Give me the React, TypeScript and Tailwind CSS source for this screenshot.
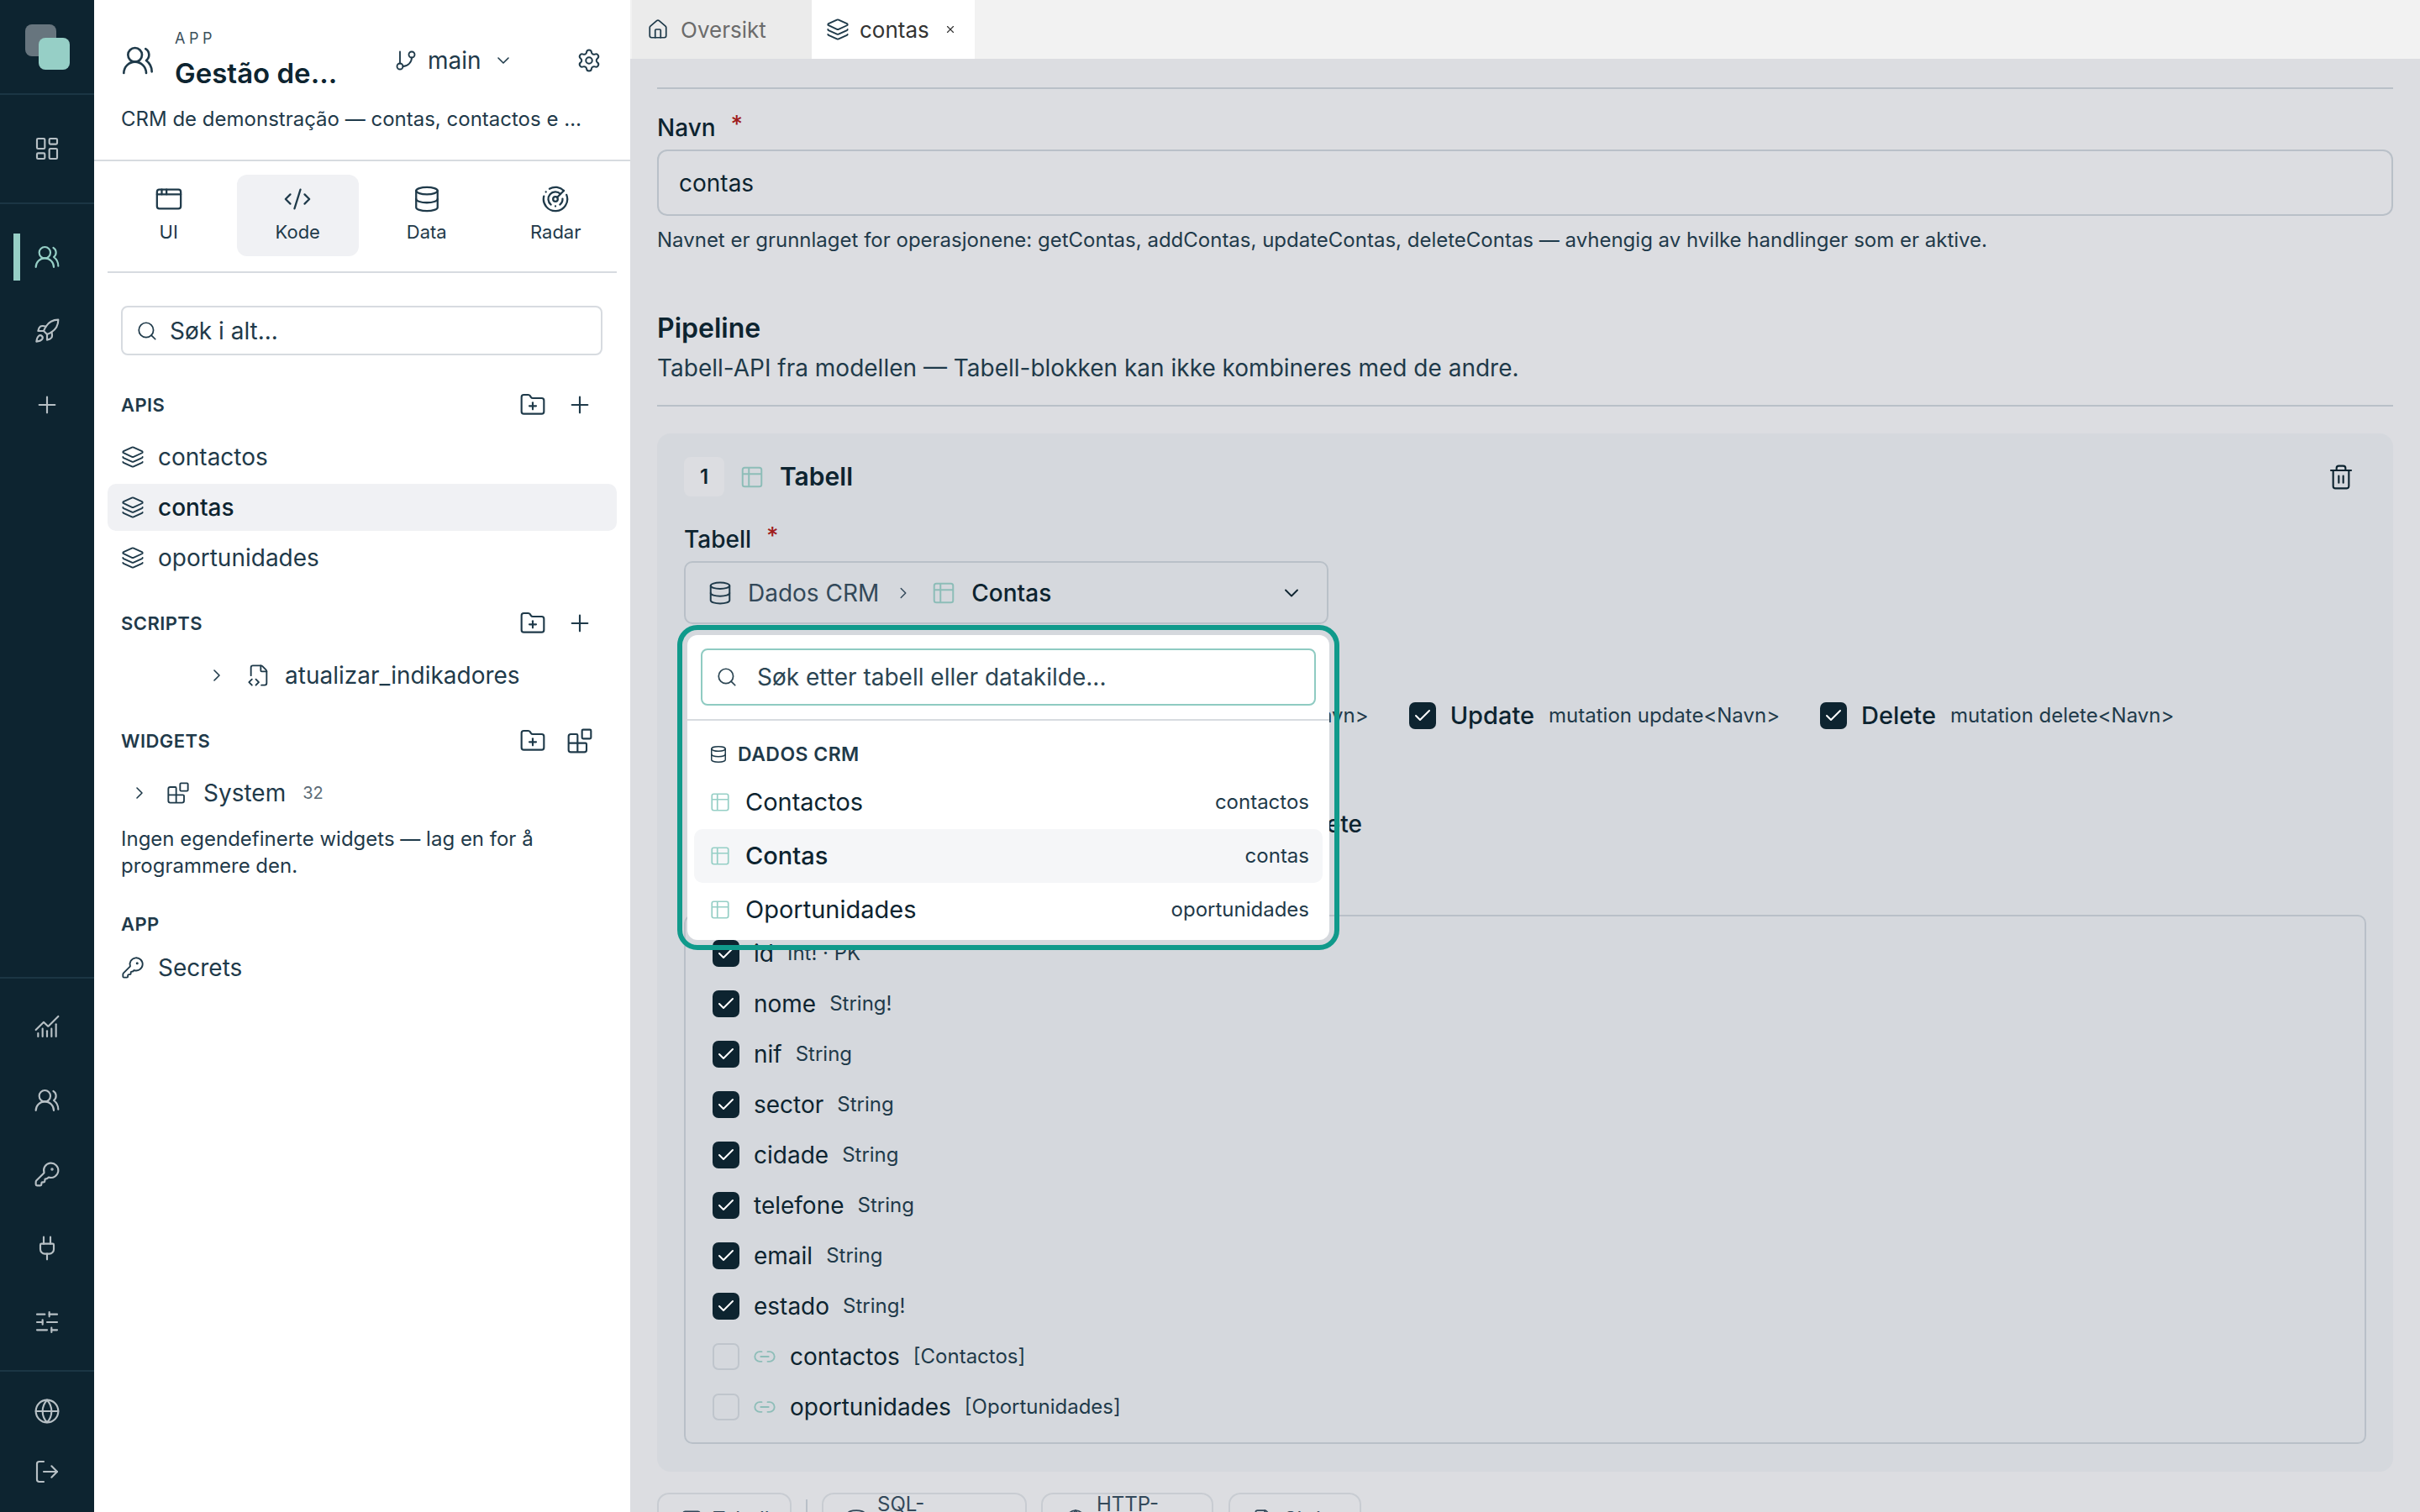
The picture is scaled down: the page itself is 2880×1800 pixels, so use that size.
import {
  AppWindow,
  Blocks,
  Check,
  ChartNoAxesCombined,
  ChevronDown,
  ChevronRight,
  CodeXml,
  Database,
  FileCode2,
  FolderPlus,
  GitBranch,
  Globe,
  House,
  KeyRound,
  Layers,
  LayoutDashboard,
  Link2,
  LogOut,
  Plug,
  Plus,
  Radar,
  Rocket,
  Search,
  Settings,
  SlidersHorizontal,
  Table2,
  Trash2,
  UsersRound,
  X,
} from "lucide-react";
import type { ReactNode } from "react";

const STROKE = 1.6;

const FIELDS = [
  { name: "id", type: "Int! · PK", checked: true },
  { name: "nome", type: "String!", checked: true },
  { name: "nif", type: "String", checked: true },
  { name: "sector", type: "String", checked: true },
  { name: "cidade", type: "String", checked: true },
  { name: "telefone", type: "String", checked: true },
  { name: "email", type: "String", checked: true },
  { name: "estado", type: "String!", checked: true },
  { name: "contactos", type: "[Contactos]", checked: false, relation: true },
  { name: "oportunidades", type: "[Oportunidades]", checked: false, relation: true },
];

function RailButton({ children, active }: { children: ReactNode; active?: boolean }) {
  return (
    <div className="relative flex h-[88px] items-center justify-center">
      {active && <div className="absolute top-[16px] left-[16px] h-[56px] w-[8px] bg-[#96cfc6]" />}
      {children}
    </div>
  );
}

function Rail() {
  const icon = "h-[32px] w-[32px] text-[#b7c0c5]";
  return (
    <aside className="flex h-full w-[112px] shrink-0 flex-col bg-[#0d2430]">
      <div className="flex h-[113px] shrink-0 items-center justify-center border-b-2 border-[#1b3644]">
        <div className="relative h-[54px] w-[53px]">
          <div className="absolute top-0 left-0 h-[38px] w-[37px] rounded-[8px] bg-[#67757e]" />
          <div className="absolute right-0 bottom-0 h-[38px] w-[37px] rounded-[8px] bg-[#96cfc6]" />
        </div>
      </div>
      <div className="flex h-[130px] shrink-0 items-center justify-center border-b-2 border-[#1b3644]">
        <LayoutDashboard className={icon} strokeWidth={STROKE} />
      </div>
      <div className="flex-1 pt-[19px]">
        <RailButton active>
          <UsersRound className="h-[32px] w-[32px] text-[#96cfc6]" strokeWidth={STROKE} />
        </RailButton>
        <RailButton>
          <Rocket className={icon} strokeWidth={STROKE} />
        </RailButton>
        <RailButton>
          <Plus className={icon} strokeWidth={STROKE} />
        </RailButton>
      </div>
      <div className="border-t-2 border-[#1b3644] pt-[13px] pb-[13px]">
        <RailButton>
          <ChartNoAxesCombined className={icon} strokeWidth={STROKE} />
        </RailButton>
        <RailButton>
          <UsersRound className={icon} strokeWidth={STROKE} />
        </RailButton>
        <RailButton>
          <KeyRound className={icon} strokeWidth={STROKE} />
        </RailButton>
        <RailButton>
          <Plug className={icon} strokeWidth={STROKE} />
        </RailButton>
        <RailButton>
          <SlidersHorizontal className={icon} strokeWidth={STROKE} />
        </RailButton>
      </div>
      <div className="border-t-2 border-[#1b3644] pt-[11px] pb-[12px]">
        <div className="flex h-[72px] items-center justify-center">
          <Globe className={icon} strokeWidth={STROKE} />
        </div>
        <div className="flex h-[72px] items-center justify-center">
          <LogOut className={icon} strokeWidth={STROKE} />
        </div>
      </div>
    </aside>
  );
}

function SectionHeader({ title, mt, action }: { title: string; mt: string; action?: ReactNode }) {
  return (
    <div className={`flex h-[32px] items-center justify-between pr-[44px] pl-[32px] ${mt}`}>
      <span className="text-[22px] font-semibold tracking-[0.02em] text-[#1f3a4a]">{title}</span>
      <div className="flex items-center gap-[24px] text-[#1f3a4a]">
        <FolderPlus className="h-[32px] w-[32px]" strokeWidth={STROKE} />
        {action ?? <Plus className="h-[32px] w-[32px]" strokeWidth={STROKE} />}
      </div>
    </div>
  );
}

function ApiRow({ label, active }: { label: string; active?: boolean }) {
  return (
    <div
      className={`mx-[16px] flex h-[56px] items-center gap-[16px] rounded-[10px] px-[16px] text-[28px] ${
        active ? "bg-[#f0f1f4] font-medium text-[#0d2430]" : "text-[#1f3a4a]"
      }`}
    >
      <Layers className="h-[28px] w-[28px] text-[#1f3a4a]" strokeWidth={STROKE} />
      {label}
    </div>
  );
}

function ModeTab({ icon, label, active }: { icon: ReactNode; label: string; active?: boolean }) {
  return (
    <div
      className={`flex h-[97px] w-[146px] flex-col items-center justify-center gap-[6px] rounded-[12px] text-[22px] text-[#1f3a4a] ${
        active ? "bg-[#f0f1f4]" : ""
      }`}
    >
      {icon}
      <span>{label}</span>
    </div>
  );
}

function Sidebar() {
  const tabIcon = "h-[34px] w-[34px]";
  return (
    <aside className="h-full w-[638px] shrink-0 bg-white">
      <div className="h-[192px] border-b-2 border-[#d7dbe0]">
        <div className="flex items-center pt-[34px] pr-[34px] pl-[32px]">
          <UsersRound className="h-[40px] w-[40px] text-[#1f3a4a]" strokeWidth={STROKE} />
          <div className="ml-[24px] w-[200px]">
            <div className="text-[18px] leading-[24px] tracking-[0.25em] text-[#3c505c]">APP</div>
            <div className="mt-[7px] truncate text-[33px] leading-[44px] font-semibold text-[#0d2430]">
              Gestão de Clientes
            </div>
          </div>
          <div className="ml-[61px] flex items-center gap-[12px] text-[28px] text-[#1f3a4a]">
            <GitBranch className="h-[28px] w-[28px]" strokeWidth={STROKE} />
            main
            <ChevronDown className="ml-[2px] h-[24px] w-[24px]" strokeWidth={STROKE} />
          </div>
          <Settings className="ml-auto h-[30px] w-[30px] text-[#1f3a4a]" strokeWidth={STROKE} />
        </div>
        <div className="mt-[15px] w-[594px] truncate pl-[32px] text-[24px] leading-[36px] text-[#1f3a4a]">
          CRM de demonstração — contas, contactos e oportunidades
        </div>
      </div>

      <div className="flex gap-[8px] px-[16px] pt-[16px]">
        <ModeTab icon={<AppWindow className={tabIcon} strokeWidth={STROKE} />} label="UI" />
        <ModeTab icon={<CodeXml className={tabIcon} strokeWidth={STROKE} />} label="Kode" active />
        <ModeTab icon={<Database className={tabIcon} strokeWidth={STROKE} />} label="Data" />
        <ModeTab icon={<Radar className={tabIcon} strokeWidth={STROKE} />} label="Radar" />
      </div>
      <div className="mx-[16px] mt-[18px] border-t-2 border-[#d7dbe0]" />

      <div className="mx-[32px] mt-[39px] flex h-[59px] w-[573px] items-center gap-[14px] rounded-[8px] border-2 border-[#d7dbe0] px-[16px] text-[28px] text-[#1f3a4a]">
        <Search className="h-[26px] w-[26px]" strokeWidth={STROKE} />
        Søk i alt...
      </div>

      <SectionHeader title="APIS" mt="mt-[43px]" />
      <div className="mt-[18px] flex flex-col gap-[4px]">
        <ApiRow label="contactos" />
        <ApiRow label="contas" active />
        <ApiRow label="oportunidades" />
      </div>

      <SectionHeader title="SCRIPTS" mt="mt-[34px]" />
      <div className="mt-[18px] flex h-[56px] items-center pl-[134px] text-[28px] text-[#1f3a4a]" style={{ paddingLeft: 134 }}>
        <ChevronRight className="h-[24px] w-[24px]" strokeWidth={STROKE} />
        <FileCode2 className="ml-[24px] h-[28px] w-[28px]" strokeWidth={STROKE} />
        <span className="ml-[17px]">atualizar_indikadores</span>
      </div>

      <SectionHeader
        title="WIDGETS"
        mt="mt-[34px]"
        action={<Blocks className="h-[32px] w-[32px]" strokeWidth={STROKE} />}
      />
      <div className="mt-[18px] flex h-[56px] items-center pl-[32px] text-[28px] text-[#1f3a4a]">
        <ChevronRight className="ml-[10px] h-[24px] w-[24px]" strokeWidth={STROKE} />
        <Blocks className="ml-[20px] h-[28px] w-[28px]" strokeWidth={STROKE} />
        <span className="ml-[16px]">System</span>
        <span className="ml-[20px] text-[20px] text-[#5c6c76]">32</span>
      </div>
      <p className="mt-[11px] w-[560px] pl-[32px] text-[24px] leading-[32px] text-[#1f3a4a]">
        Ingen egendefinerte widgets — lag en for å programmere den.
      </p>

      <div className="mt-[37px] flex h-[32px] items-center pl-[32px] text-[22px] font-semibold tracking-[0.02em] text-[#1f3a4a]">
        APP
      </div>
      <div className="mt-[8px] flex h-[56px] items-center gap-[16px] pl-[32px] text-[28px] text-[#1f3a4a]">
        <KeyRound className="h-[28px] w-[28px]" strokeWidth={STROKE} />
        Secrets
      </div>
    </aside>
  );
}

function TabBar() {
  return (
    <div className="relative z-10 flex h-[70px] shrink-0 bg-[#f2f2f2] text-[26px]">
      <div className="ml-[2px] flex w-[214px] items-center gap-[14px] bg-[#ebebeb] pl-[18px] text-[#6b6b6b]">
        <House className="h-[26px] w-[26px] text-[#1f3a4a]" strokeWidth={STROKE} />
        Oversikt
      </div>
      <div className="flex w-[194px] items-center bg-white pl-[17px] text-[#333333]">
        <Layers className="h-[28px] w-[28px] text-[#1f3a4a]" strokeWidth={STROKE} />
        <span className="ml-[12px]">contas</span>
        <X className="ml-[18px] h-[14px] w-[14px] text-[#333333]" strokeWidth={2} />
      </div>
    </div>
  );
}

function CheckBox({ checked = true }: { checked?: boolean }) {
  return checked ? (
    <span className="flex h-[32px] w-[32px] shrink-0 items-center justify-center rounded-[7px] bg-[#0d2430]">
      <Check className="h-[24px] w-[24px] text-white" strokeWidth={2} />
    </span>
  ) : (
    <span className="h-[32px] w-[32px] shrink-0 rounded-[7px] border-2 border-[#bfc5cc]" />
  );
}

function Operation({ label, hint, className }: { label: string; hint: string; className?: string }) {
  return (
    <div className={`flex shrink-0 items-center whitespace-nowrap ${className ?? ""}`}>
      <CheckBox />
      <span className="ml-[17px] text-[29px] font-medium text-[#0d2430]">{label}</span>
      <span className="ml-[17px] text-[24px] text-[#1f3a4a]">{hint}</span>
    </div>
  );
}

function TableDropdown() {
  const rows = [
    { name: "Contactos", id: "contactos" },
    { name: "Contas", id: "contas", active: true },
    { name: "Oportunidades", id: "oportunidades" },
  ];
  return (
    <div className="absolute top-[86px] left-[2px] z-20 h-[363px] w-[764px] rounded-[12px] bg-white outline-[6px] outline-offset-[6px] outline-[#109a8b] outline-solid">
      <div className="px-[16px] pt-[16px]">
        <div className="flex h-[68px] items-center rounded-[8px] border-2 border-[#8fcbc2] pl-[16px] text-[28px] text-[#2b4553]">
          <Search className="h-[26px] w-[26px]" strokeWidth={STROKE} />
          <span className="ml-[23px]">Søk etter tabell eller datakilde...</span>
        </div>
      </div>
      <div className="mt-[16px] border-t-2 border-[#d7dbe0]" />
      <div className="mt-[24px] flex h-[32px] items-center pl-[26px] text-[23px] font-semibold tracking-[0.02em] text-[#1f3a4a]">
        <Database className="h-[22px] w-[22px]" strokeWidth={STROKE} />
        <span className="ml-[12px]">DADOS CRM</span>
      </div>
      <div className="mt-[9px] px-[8px]">
        {rows.map((row) => (
          <div
            key={row.id}
            className={`flex h-[64px] items-center rounded-[10px] pr-[16px] pl-[18px] ${row.active ? "bg-[#f5f6f8]" : ""}`}
          >
            <Table2 className="h-[26px] w-[26px] text-[#96cfc6]" strokeWidth={STROKE} />
            <span className={`ml-[17px] text-[29px] text-[#0d2430] ${row.active ? "font-medium" : ""}`}>
              {row.name}
            </span>
            <span className="ml-auto text-[24px] text-[#1f3a4a]">{row.id}</span>
          </div>
        ))}
      </div>
    </div>
  );
}

function BlockCard() {
  return (
    <div className="mt-[32px] rounded-[16px] bg-[#d5d8dd] px-[32px] pt-[28px] pb-[33px]">
      <div className="flex h-[47px] items-center">
        <span className="flex h-[47px] w-[48px] items-center justify-center rounded-[8px] bg-[#dcdde1] text-[24px] font-semibold text-[#0d2430]">
          1
        </span>
        <Table2 className="ml-[18px] h-[30px] w-[30px] text-[#8dbdb8]" strokeWidth={STROKE} />
        <span className="ml-[18px] text-[30px] font-semibold text-[#0d2430]">Tabell</span>
        <Trash2 className="mr-[14px] ml-auto h-[32px] w-[32px] text-[#0d2430]" strokeWidth={STROKE} />
      </div>

      <div className="mt-[31px] flex h-[40px] items-center text-[28px] font-medium text-[#0d2430]">
        Tabell <span className="ml-[18px] -translate-y-[4px] text-[#a01c1c]">*</span>
      </div>
      <div className="relative mt-[6px] flex h-[75px] w-[767px] items-center rounded-[10px] border-2 border-[#b9c0c8] pr-[28px] pl-[26px] text-[28px]">
        <Database className="h-[30px] w-[30px] text-[#1f3a4a]" strokeWidth={STROKE} />
        <span className="ml-[18px] text-[#33495a]">Dados CRM</span>
        <ChevronRight className="ml-[18px] h-[22px] w-[22px] text-[#33495a]" strokeWidth={STROKE} />
        <Table2 className="ml-[22px] h-[30px] w-[30px] text-[#8dbdb8]" strokeWidth={STROKE} />
        <span className="ml-[18px] font-medium text-[#0d2430]">Contas</span>
        <ChevronDown className="ml-auto h-[28px] w-[28px] text-[#0d2430]" strokeWidth={STROKE} />
        <TableDropdown />
      </div>

      <div className="mt-[93px] flex h-[32px] items-center gap-[48px]">
        <Operation className="ml-[34px]" label="Read" hint="query get<Navn>" />
        <Operation label="Create" hint="mutation add<Navn>" />
        <Operation label="Update" hint="mutation update<Navn>" />
        <Operation label="Delete" hint="mutation delete<Navn>" />
      </div>

      <div className="mt-[93px] flex h-[40px] w-[807px] items-center justify-end text-[28px] font-medium whitespace-nowrap text-[#0d2430]">
        Felter som skal eksponeres ved complete
      </div>

      <div className="mt-[88px] h-[630px] rounded-[10px] border-2 border-[#b9c0c8] px-[32px] pt-[14px]">
        {FIELDS.map((field) => (
          <div key={field.name} className="flex h-[60px] items-center">
            <CheckBox checked={field.checked} />
            {field.relation && <Link2 className="ml-[16px] h-[28px] w-[28px] text-[#8dbdb8]" strokeWidth={STROKE} />}
            <span className={`${field.relation ? "ml-[16px]" : "ml-[17px]"} text-[28px] text-[#0d2430]`}>
              {field.name}
            </span>
            <span className="ml-[16px] text-[24px] text-[#1f3a4a]">{field.type}</span>
          </div>
        ))}
      </div>
    </div>
  );
}

function AddButton({ icon, label, width }: { icon: ReactNode; label: string; width: string }) {
  return (
    <div
      className={`flex h-[64px] items-center gap-[12px] rounded-[14px] border-2 border-[#c8ccd2] px-[26px] text-[24px] text-[#33495a] ${width}`}
    >
      {icon}
      {label}
    </div>
  );
}

function MainPanel() {
  const addIcon = "h-[26px] w-[26px] shrink-0";
  return (
    <main className="flex h-full min-w-0 flex-1 flex-col overflow-hidden bg-[#dcdde1]">
      <TabBar />
      <div className="-mt-[30px] pr-[32px] pl-[32px]">
        <div className="h-[32px] text-[24px] leading-[32px] text-[#1f3a4a]">
          Hver API eksponeres som spørring (query) og mutasjoner mot valgt modell
        </div>
        <div className="mt-[32px] border-t-2 border-[#b9c0c8]" />

        <div className="mt-[26px] flex h-[40px] items-center text-[28px] font-medium text-[#0d2430]">
          Navn <span className="ml-[18px] -translate-y-[4px] text-[#a01c1c]">*</span>
        </div>
        <div className="mt-[6px] flex h-[79px] items-center rounded-[12px] border-2 border-[#b9c0c8] pl-[24px] text-[28px] text-[#0d2430]">
          contas
        </div>
        <p className="mt-[13px] text-[24px] leading-[32px] text-[#1f3a4a]">
          Navnet er grunnlaget for operasjonene: getContas, addContas, updateContas, deleteContas — avhengig av hvilke
          handlinger som er aktive.
        </p>

        <h2 className="mt-[67px] text-[32px] leading-[44px] font-semibold text-[#0d2430]">Pipeline</h2>
        <p className="mt-[5px] text-[28px] leading-[40px] text-[#1f3a4a]">
          Tabell-API fra modellen — Tabell-blokken kan ikke kombineres med de andre.
        </p>
        <div className="mt-[24px] border-t-2 border-[#b9c0c8]" />

        <BlockCard />

        <div className="mt-[25px] flex items-start">
          <AddButton icon={<Table2 className={addIcon} strokeWidth={STROKE} />} label="Tabell" width="w-[160px]" />
          <div className="mx-[17px] mt-[8px] h-[40px] w-[2px] bg-[#b9c0c8]" />
          <AddButton icon={<Database className={addIcon} strokeWidth={STROKE} />} label="SQL-spørring" width="w-[244px]" />
          <div className="w-[17px]" />
          <AddButton icon={<Globe className={addIcon} strokeWidth={STROKE} />} label="HTTP-kall" width="w-[205px]" />
          <div className="w-[18px]" />
          <AddButton icon={<FileCode2 className={addIcon} strokeWidth={STROKE} />} label="Skript" width="w-[158px]" />
        </div>
      </div>
    </main>
  );
}

export default function App() {
  return (
    <div className="flex h-[1800px] w-[2880px] overflow-hidden bg-white font-['Inter',sans-serif]">
      <Rail />
      <Sidebar />
      <MainPanel />
    </div>
  );
}
